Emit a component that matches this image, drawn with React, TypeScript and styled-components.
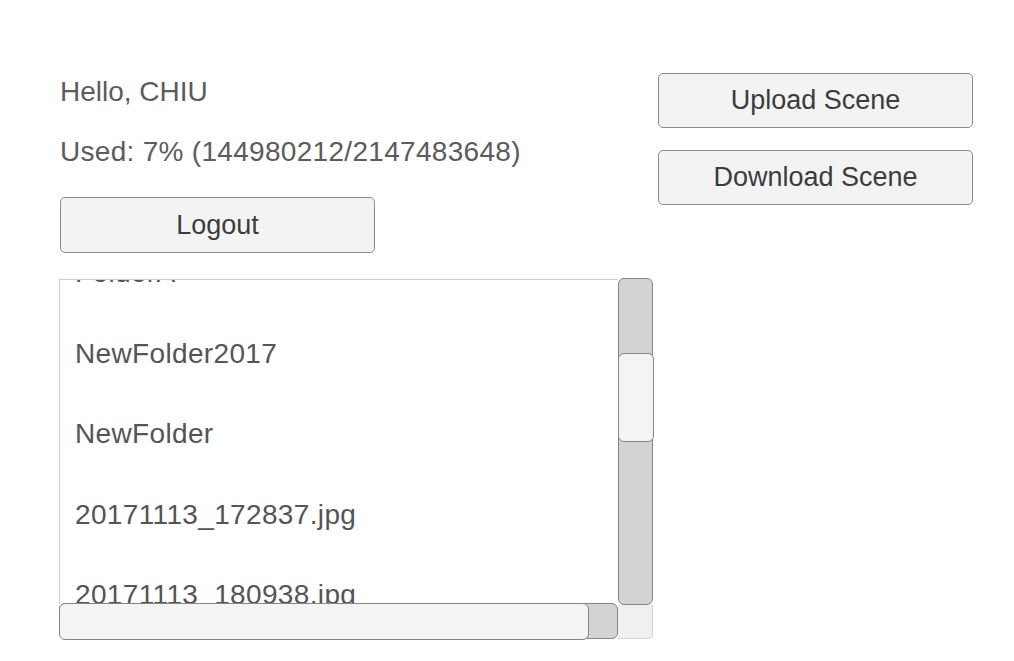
import styled, { createGlobalStyle } from "styled-components";

const GlobalStyle = createGlobalStyle`
  html, body {
    margin: 0;
    padding: 0;
    background: #ffffff;
  }
  body {
    font-family: "Liberation Sans", Arial, sans-serif;
  }
`;

const Page = styled.div`
  display: flex;
  align-items: flex-start;
  padding-left: 59px;
  width: 1014px;
  height: 661px;
  box-sizing: border-box;
  overflow: hidden;
`;

const LeftColumn = styled.div`
  display: flex;
  flex-direction: column;
  width: 594px;
  padding-top: 76px;
`;

const RightColumn = styled.div`
  display: flex;
  flex-direction: column;
  gap: 22px;
  width: 315px;
  margin-left: 5px;
  padding-top: 73px;
`;

const InfoLabel = styled.div<{ gapTop?: number; spacing?: number }>`
  margin: ${({ gapTop }) => gapTop || 0}px 0 0 1px;
  font-size: 28px;
  line-height: 32px;
  letter-spacing: ${({ spacing }) => spacing || 0}px;
  color: #5c5c5c;
  white-space: nowrap;
`;

const Button = styled.button<{ width?: number; height?: number; gapTop?: number }>`
  display: flex;
  align-items: center;
  justify-content: center;
  width: ${({ width }) => width || 315}px;
  height: ${({ height }) => height || 55}px;
  margin-top: ${({ gapTop }) => gapTop || 0}px;
  padding: 0;
  box-sizing: border-box;
  border: 1px solid #8c8c8c;
  border-radius: 5px;
  background: #f3f3f3;
  font-family: "Liberation Sans", Arial, sans-serif;
  font-size: 27px;
  color: #3c3c3c;
`;

const LogoutButton = styled(Button)`
  margin-left: 1px;
`;

const ScrollView = styled.div`
  display: grid;
  grid-template-columns: 559px 35px;
  grid-template-rows: 325px 35px;
  margin-top: 26px;
`;

const Viewport = styled.div`
  overflow: hidden;
  border-top: 1px solid #cdcdcd;
  border-left: 1px solid #cdcdcd;
  background: #ffffff;
`;

const ItemList = styled.ul<{ offset: number }>`
  list-style: none;
  margin: ${({ offset }) => -offset}px 0 0 0;
  padding: 0;
`;

const Item = styled.li`
  height: 80.5px;
  line-height: 80.5px;
  padding-left: 15px;
  font-size: 28px;
  letter-spacing: 0.35px;
  color: #555555;
  white-space: nowrap;
`;

const VTrack = styled.div`
  display: flex;
  flex-direction: column;
  margin: -1px 0 -1px;
  box-sizing: border-box;
  border: 1.5px solid #858585;
  border-radius: 6px;
  background: #d3d3d3;
  padding-top: 74px;
`;

const VThumb = styled.div`
  height: 89px;
  margin: 0 -1.5px;
  box-sizing: border-box;
  border: 1.5px solid #858585;
  border-radius: 6px;
  background: #f4f4f4;
`;

const HTrack = styled.div`
  display: flex;
  margin-top: -1px;
  box-sizing: border-box;
  border: 1.5px solid #858585;
  border-radius: 6px;
  background: #d3d3d3;
`;

const HThumb = styled.div`
  width: 530px;
  margin: -1.5px 0 -1.5px -1.5px;
  box-sizing: border-box;
  border: 1.5px solid #858585;
  border-radius: 6px;
  background: #f4f4f4;
`;

const Corner = styled.div`
  margin-top: 1px;
  box-sizing: border-box;
  border-right: 1px solid #d4d4d4;
  border-bottom: 1px solid #d4d4d4;
  border-radius: 0 0 5px 0;
  background: #f0f0f0;
`;

const files = [
  "FolderA",
  "NewFolder2017",
  "NewFolder",
  "20171113_172837.jpg",
  "20171113_180938.jpg",
];

export default function App() {
  return (
    <>
      <GlobalStyle />
      <Page>
        <LeftColumn>
          <InfoLabel>Hello, CHIU</InfoLabel>
          <InfoLabel gapTop={28} spacing={0.3}>
            Used: 7% (144980212/2147483648)
          </InfoLabel>
          <LogoutButton width={315} height={56} gapTop={29}>
            Logout
          </LogoutButton>
          <ScrollView>
            <Viewport>
              <ItemList offset={47}>
                {files.map((f) => (
                  <Item key={f}>{f}</Item>
                ))}
              </ItemList>
            </Viewport>
            <VTrack>
              <VThumb />
            </VTrack>
            <HTrack>
              <HThumb />
            </HTrack>
            <Corner />
          </ScrollView>
        </LeftColumn>
        <RightColumn>
          <Button>Upload Scene</Button>
          <Button>Download Scene</Button>
        </RightColumn>
      </Page>
    </>
  );
}
